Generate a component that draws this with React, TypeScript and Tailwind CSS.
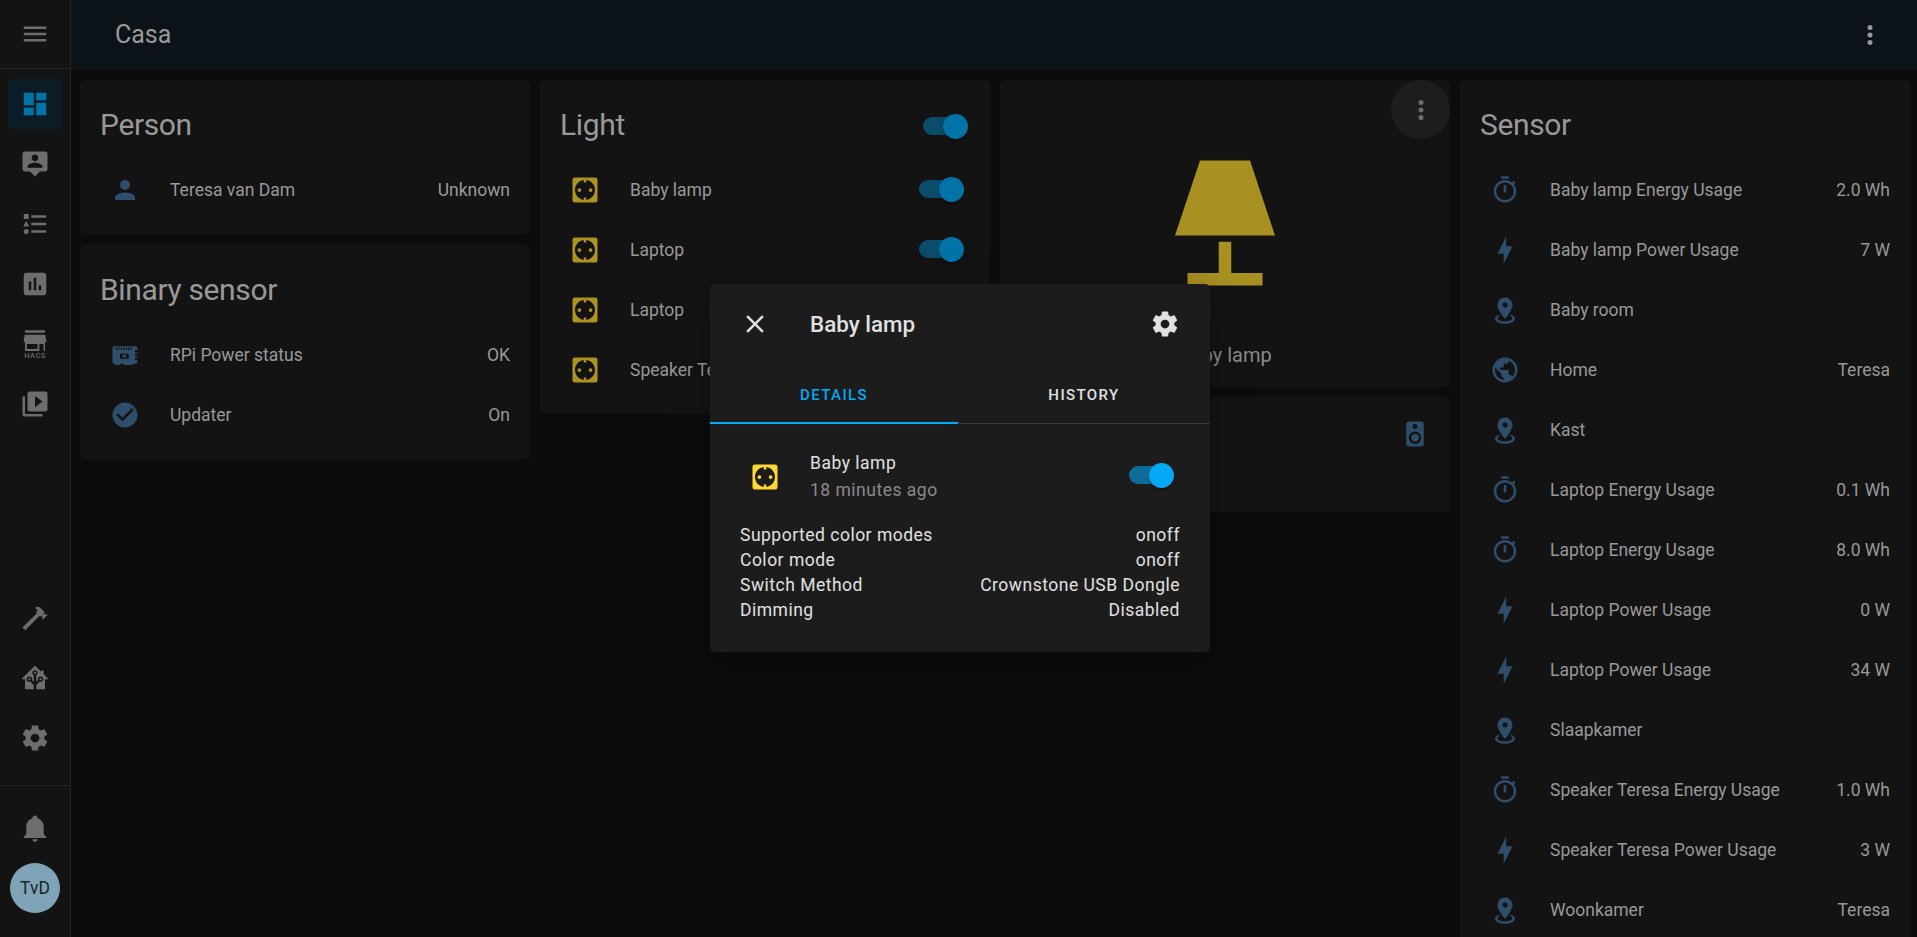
const P = {
  menu: "M3,6H21V8H3V6M3,11H21V13H3V11M3,16H21V18H3V16Z",
  dashboard: "M13,3V9H21V3M13,21H21V11H13M3,21H11V15H3M3,13H11V3H3V13Z",
  tooltipAccount: "M20 2H4C2.9 2 2 2.9 2 4V16C2 17.1 2.9 18 4 18H8L12 22L16 18H20C21.1 18 22 17.1 22 16V4C22 2.9 21.1 2 20 2M12 4.3C13.5 4.3 14.7 5.5 14.7 7S13.5 9.7 12 9.7 9.3 8.5 9.3 7 10.5 4.3 12 4.3M18 15H6V14.1C6 12.1 10 11 12 11S18 12.1 18 14.1V15Z",
  listType: "M5,9.5L7.5,14H2.5L5,9.5M3,4H7V8H3V4M5,20A2,2 0 0,0 7,18A2,2 0 0,0 5,16A2,2 0 0,0 3,18A2,2 0 0,0 5,20M9,5V7H21V5H9M9,19H21V17H9V19M9,13H21V11H9V13Z",
  chartBox: "M19 3H5C3.9 3 3 3.9 3 5V19C3 20.1 3.9 21 5 21H19C20.1 21 21 20.1 21 19V5C21 3.9 20.1 3 19 3M9 17H7V10H9V17M13 17H11V7H13V17M17 17H15V13H17V17Z",
  playBoxes: "M4,6H2V20A2,2 0 0,0 4,22H18V20H4V6M20,2A2,2 0 0,1 22,4V16A2,2 0 0,1 20,18H8A2,2 0 0,1 6,16V4A2,2 0 0,1 8,2H20M12,14.5L18,10L12,5.5V14.5Z",
  hammer: "M2 19.63L13.43 8.2L12.72 7.5L14.14 6.07L12 3.89C13.2 2.7 15.09 2.7 16.27 3.89L19.87 7.5L18.45 8.91H21.29L22 9.62L18.45 13.21L17.74 12.5V9.62L16.27 11.04L15.56 10.33L4.13 21.76L2 19.63Z",
  homeAssistant: "M21.8,13H20V21H13V17.67L15.79,14.88L16.5,15C17.66,15 18.6,14.06 18.6,12.9C18.6,11.74 17.66,10.8 16.5,10.8A2.1,2.1 0 0,0 14.4,12.9L14.5,13.61L13,15.13V9.65C13.66,9.29 14.1,8.6 14.1,7.8A2.1,2.1 0 0,0 12,5.7A2.1,2.1 0 0,0 9.9,7.8C9.9,8.6 10.34,9.29 11,9.65V15.13L9.5,13.61L9.6,12.9A2.1,2.1 0 0,0 7.5,10.8A2.1,2.1 0 0,0 5.4,12.9A2.1,2.1 0 0,0 7.5,15L8.21,14.88L11,17.67V21H4V13H2.25C1.83,13 1.42,13 1.42,12.79C1.43,12.57 1.85,12.15 2.28,11.72L11,3C11.33,2.67 11.67,2.33 12,2.33C12.33,2.33 12.67,2.67 13,3L17,7V6H19V9L21.78,11.78C22.18,12.18 22.59,12.59 22.6,12.8C22.6,13 22.2,13 21.8,13M7.5,12A0.9,0.9 0 0,1 8.4,12.9A0.9,0.9 0 0,1 7.5,13.8A0.9,0.9 0 0,1 6.6,12.9A0.9,0.9 0 0,1 7.5,12M16.5,12C17,12 17.4,12.4 17.4,12.9C17.4,13.4 17,13.8 16.5,13.8A0.9,0.9 0 0,1 15.6,12.9A0.9,0.9 0 0,1 16.5,12M12,6.9C12.5,6.9 12.9,7.3 12.9,7.8C12.9,8.3 12.5,8.7 12,8.7C11.5,8.7 11.1,8.3 11.1,7.8C11.1,7.3 11.5,6.9 12,6.9Z",
  cog: "M12,15.5A3.5,3.5 0 0,1 8.5,12A3.5,3.5 0 0,1 12,8.5A3.5,3.5 0 0,1 15.5,12A3.5,3.5 0 0,1 12,15.5M19.43,12.97C19.47,12.65 19.5,12.33 19.5,12C19.5,11.67 19.47,11.34 19.43,11L21.54,9.37C21.73,9.22 21.78,8.95 21.66,8.73L19.66,5.27C19.54,5.05 19.27,4.96 19.05,5.05L16.56,6.05C16.04,5.66 15.5,5.32 14.87,5.07L14.5,2.42C14.46,2.18 14.25,2 14,2H10C9.75,2 9.54,2.18 9.5,2.42L9.13,5.07C8.5,5.32 7.96,5.66 7.44,6.05L4.95,5.05C4.73,4.96 4.46,5.05 4.34,5.27L2.34,8.73C2.21,8.95 2.27,9.22 2.46,9.37L4.57,11C4.53,11.34 4.5,11.67 4.5,12C4.5,12.33 4.53,12.65 4.57,12.97L2.46,14.63C2.27,14.78 2.21,15.05 2.34,15.27L4.34,18.73C4.46,18.95 4.73,19.03 4.95,18.95L7.44,17.94C7.96,18.34 8.5,18.68 9.13,18.93L9.5,21.58C9.54,21.82 9.75,22 10,22H14C14.25,22 14.46,21.82 14.5,21.58L14.87,18.93C15.5,18.67 16.04,18.34 16.56,17.94L19.05,18.95C19.27,19.03 19.54,18.95 19.66,18.73L21.66,15.27C21.78,15.05 21.73,14.78 21.54,14.63L19.43,12.97Z",
  bell: "M21,19V20H3V19L5,17V11C5,7.9 7.03,5.17 10,4.29C10,4.19 10,4.1 10,4A2,2 0 0,1 12,2A2,2 0 0,1 14,4C14,4.1 14,4.19 14,4.29C16.97,5.17 19,7.9 19,11V17L21,19M14,21A2,2 0 0,1 12,23A2,2 0 0,1 10,21",
  dots: "M12,16A2,2 0 0,1 14,18A2,2 0 0,1 12,20A2,2 0 0,1 10,18A2,2 0 0,1 12,16M12,10A2,2 0 0,1 14,12A2,2 0 0,1 12,14A2,2 0 0,1 10,12A2,2 0 0,1 12,10M12,4A2,2 0 0,1 14,6A2,2 0 0,1 12,8A2,2 0 0,1 10,6A2,2 0 0,1 12,4Z",
  account: "M12,4A4,4 0 0,1 16,8A4,4 0 0,1 12,12A4,4 0 0,1 8,8A4,4 0 0,1 12,4M12,14C16.42,14 20,15.79 20,18V20H4V18C4,15.79 7.58,14 12,14Z",
  checkCircle: "M12 2C6.5 2 2 6.5 2 12S6.5 22 12 22 22 17.5 22 12 17.5 2 12 2M10 17L5 12L6.41 10.59L10 14.17L17.59 6.58L19 8L10 17Z",
  raspberry: "M2 6.5C2 5.7 2.7 5 3.5 5H20.5C21.3 5 22 5.7 22 6.5V8H20V10H22V11H20V13H22V14H20V16H22V17.5C22 18.3 21.3 19 20.5 19H18V20H11V19H8V20H4V19H3.5C2.7 19 2 18.3 2 17.5V6.5ZM4.5 6V8H5.5V6H4.5ZM6.5 6V8H7.5V6H6.5ZM8.5 6V8H9.5V6H8.5ZM10.5 6V8H11.5V6H10.5ZM12.5 6V8H13.5V6H12.5ZM14.5 6V8H15.5V6H14.5ZM16.5 6V8H17.5V6H16.5ZM8 11V15H15V11H8ZM10 12H13V14H10V12Z",
  socket: "M4 2H20A2 2 0 0 1 22 4V20A2 2 0 0 1 20 22H4A2 2 0 0 1 2 20V4A2 2 0 0 1 4 2M13 4.07V6H11V4.07C7.06 4.56 4 7.92 4 12S7.06 19.44 11 19.93V18H13V19.93C16.94 19.44 20 16.08 20 12S16.94 4.56 13 4.07ZM7.5 10.5A1.5 1.5 0 0 0 6 12A1.5 1.5 0 0 0 7.5 13.5A1.5 1.5 0 0 0 9 12A1.5 1.5 0 0 0 7.5 10.5ZM16.5 10.5A1.5 1.5 0 0 0 15 12A1.5 1.5 0 0 0 16.5 13.5A1.5 1.5 0 0 0 18 12A1.5 1.5 0 0 0 16.5 10.5Z",
  timer: "M12,20A7,7 0 0,1 5,13A7,7 0 0,1 12,6A7,7 0 0,1 19,13A7,7 0 0,1 12,20M19.03,7.39L20.45,5.97C20,5.46 19.55,5 19.04,4.56L17.62,6C16.07,4.74 14.12,4 12,4A9,9 0 0,0 3,13A9,9 0 0,0 12,22C17,22 21,17.97 21,13C21,10.88 20.26,8.93 19.03,7.39M11,14H13V8H11M15,1H9V3H15V1Z",
  bolt: "M11 15H6L13 1V9H18L11 23V15Z",
  marker: "M12,2C15.31,2 18,4.66 18,7.95C18,12.41 12,19 12,19C12,19 6,12.41 6,7.95C6,4.66 8.69,2 12,2M12,6A2,2 0 0,0 10,8A2,2 0 0,0 12,10A2,2 0 0,0 14,8A2,2 0 0,0 12,6M20,19C20,21.21 16.42,23 12,23C7.58,23 4,21.21 4,19C4,17.71 5.22,16.56 7.11,15.83L7.75,16.74C6.67,17.19 6,17.81 6,18.5C6,19.88 8.69,21 12,21C15.31,21 18,19.88 18,18.5C18,17.81 17.33,17.19 16.25,16.74L16.89,15.83C18.78,16.56 20,17.71 20,19Z",
  earth: "M17.9,17.39C17.64,16.59 16.89,16 16,16H15V13A1,1 0 0,0 14,12H8V10H10A1,1 0 0,0 11,9V7H13A2,2 0 0,0 15,5V4.59C17.93,5.77 20,8.64 20,12C20,14.08 19.2,15.97 17.9,17.39M11,19.93C7.05,19.44 4,16.08 4,12C4,11.38 4.08,10.78 4.21,10.21L9,15V16A2,2 0 0,0 11,18M12,2A10,10 0 0,0 2,12A10,10 0 0,0 12,22A10,10 0 0,0 22,12A10,10 0 0,0 12,2Z",
  speaker: "M12,12A3,3 0 0,0 9,15A3,3 0 0,0 12,18A3,3 0 0,0 15,15A3,3 0 0,0 12,12M12,20A5,5 0 0,1 7,15A5,5 0 0,1 12,10A5,5 0 0,1 17,15A5,5 0 0,1 12,20M12,4A2,2 0 0,1 14,6A2,2 0 0,1 12,8C10.89,8 10,7.1 10,6C10,4.89 10.89,4 12,4M17,2H7C5.89,2 5,2.89 5,4V20A2,2 0 0,0 7,22H17A2,2 0 0,0 19,20V4C19,2.89 18.1,2 17,2Z",
  close: "M19,6.41L17.59,5L12,10.59L6.41,5L5,6.41L10.59,12L5,17.59L6.41,19L12,13.41L17.59,19L19,17.59L13.41,12L19,6.41Z",
  lamp: "M8,2H16L20,14H4L8,2M11,15H13V20H18V22H6V20H11V15Z",
}

function Icon({ d, className = "w-[30px] h-[30px]" }: { d: string; className?: string }) {
  return (
    <svg viewBox="0 0 24 24" className={`${className} shrink-0 fill-current`} fillRule="evenodd">
      <path d={d} />
    </svg>
  )
}

function Hacs() {
  return (
    <svg viewBox="0 0 24 24" className="w-[30px] h-[30px] shrink-0 fill-current">
      <path d="M4 1H20V3H4ZM3.8 4.6H20.2L21.2 10.5H2.8ZM4 10.5H20V17.6H18.8V12H15.5V17.6H4ZM5.5 12V16H14V12Z" fillRule="evenodd" />
      <text x="12" y="23.2" textAnchor="middle" fontSize="5.8" fontWeight="500" fontFamily="Roboto, sans-serif" letterSpacing="0.5">HACS</text>
    </svg>
  )
}

function Switch({ bright = false, dialog = false }: { bright?: boolean; dialog?: boolean }) {
  return (
    <div className="relative w-[45px] h-[25px] shrink-0 flex items-center">
      <div className={`w-[40px] h-[18px] rounded-full ${dialog ? "bg-[#0f6c99]" : "bg-[#0b4c6b]"}`} />
      <div className={`absolute right-0 top-0 w-[25px] h-[25px] rounded-full shadow-[0_2px_2px_rgba(0,0,0,0.35)] ${bright ? "bg-[#03a9f4]" : "bg-[#0273a6]"}`} />
    </div>
  )
}

function Card({ title, action, children }: { title: string; action?: React.ReactNode; children: React.ReactNode }) {
  return (
    <section className="bg-[#131313] rounded-[5px] pb-[14px]">
      <div className="h-[80px] pl-[20px] pr-[22px] pt-[10px] flex items-center justify-between">
        <h2 className="text-[30px] font-normal leading-[40px] tracking-[-0.36px] text-[#999999]">{title}</h2>
        {action && <div className="mt-[2px]">{action}</div>}
      </div>
      {children}
    </section>
  )
}

function Row({ icon, iconColor = "text-[#2e4e6b]", name, value, control }: { icon: string; iconColor?: string; name: string; value?: string; control?: React.ReactNode }) {
  return (
    <div className="h-[60px] pl-[30px] pr-[20px] flex items-center text-[17.5px] text-[#999999]">
      <div className={iconColor}>
        <Icon d={icon} />
      </div>
      <span className="ml-[30px] flex-1 whitespace-nowrap">{name}</span>
      {value && <span className="whitespace-nowrap">{value}</span>}
      {control && <div className="mr-[6px] mb-[2px]">{control}</div>}
    </div>
  )
}

const sensors: [string, string, string?][] = [
  [P.timer, "Baby lamp Energy Usage", "2.0 Wh"],
  [P.bolt, "Baby lamp Power Usage", "7 W"],
  [P.marker, "Baby room"],
  [P.earth, "Home", "Teresa"],
  [P.marker, "Kast"],
  [P.timer, "Laptop Energy Usage", "0.1 Wh"],
  [P.timer, "Laptop Energy Usage", "8.0 Wh"],
  [P.bolt, "Laptop Power Usage", "0 W"],
  [P.bolt, "Laptop Power Usage", "34 W"],
  [P.marker, "Slaapkamer"],
  [P.timer, "Speaker Teresa Energy Usage", "1.0 Wh"],
  [P.bolt, "Speaker Teresa Power Usage", "3 W"],
  [P.marker, "Woonkamer", "Teresa"],
]

const attributes = [
  ["Supported color modes", "onoff"],
  ["Color mode", "onoff"],
  ["Switch Method", "Crownstone USB Dongle"],
  ["Dimming", "Disabled"],
]

function NavItem({ children, active = false }: { children: React.ReactNode; active?: boolean }) {
  return (
    <div className={`mx-[8px] h-[50px] rounded-[5px] flex items-center justify-center ${active ? "bg-[#0b1c26] text-[#0273a6]" : "text-[#6d6d6d]"}`}>
      {children}
    </div>
  )
}

export default function App() {
  return (
    <div className="relative h-[937px] overflow-hidden flex bg-[#0c0c0c] font-['Roboto',sans-serif]">
      <aside className="w-[71px] shrink-0 bg-[#131313] border-r border-[#252525] flex flex-col">
        <div className="h-[69px] shrink-0 border-b border-[#252525] flex items-center justify-center text-[#6d6d6d]">
          <Icon d={P.menu} />
        </div>
        <nav className="pt-[10px] flex flex-col gap-[10px]">
          <NavItem active><Icon d={P.dashboard} /></NavItem>
          <NavItem><Icon d={P.tooltipAccount} /></NavItem>
          <NavItem><Icon d={P.listType} /></NavItem>
          <NavItem><Icon d={P.chartBox} /></NavItem>
          <NavItem><Hacs /></NavItem>
          <NavItem><Icon d={P.playBoxes} /></NavItem>
        </nav>
        <div className="mt-auto flex flex-col gap-[10px]">
          <NavItem><Icon d={P.hammer} /></NavItem>
          <NavItem><Icon d={P.homeAssistant} /></NavItem>
          <NavItem><Icon d={P.cog} /></NavItem>
          <div className="mt-[12px] border-t border-[#252525] pt-[17px] pb-[24px] flex flex-col gap-[10px]">
            <NavItem><Icon d={P.bell} /></NavItem>
            <div className="mx-auto w-[50px] h-[50px] rounded-full bg-[#7fa3b7] text-[#1c2328] text-[17.5px] flex items-center justify-center">TvD</div>
          </div>
        </div>
      </aside>

      <div className="flex-1 min-w-0">
        <header className="h-[69px] bg-[#0b1218] pl-[44px] pr-[32px] flex items-center justify-between text-[#999999]">
          <h1 className="text-[25px] font-normal">Casa</h1>
          <Icon d={P.dots} />
        </header>
        <main className="pt-[11px] pl-[9px] flex gap-[10px] items-start">
          <div className="w-[450px] flex flex-col gap-[11px]">
            <Card title="Person">
              <Row icon={P.account} name="Teresa van Dam" value="Unknown" />
            </Card>
            <Card title="Binary sensor">
              <Row icon={P.raspberry} name="RPi Power status" value="OK" />
              <Row icon={P.checkCircle} name="Updater" value="On" />
            </Card>
          </div>

          <div className="w-[450px]">
            <Card title="Light" action={<Switch />}>
              <Row icon={P.socket} iconColor="text-[#ac9324]" name="Baby lamp" control={<Switch />} />
              <Row icon={P.socket} iconColor="text-[#ac9324]" name="Laptop" control={<Switch />} />
              <Row icon={P.socket} iconColor="text-[#ac9324]" name="Laptop" control={<Switch />} />
              <Row icon={P.socket} iconColor="text-[#ac9324]" name="Speaker Teresa" control={<Switch />} />
            </Card>
          </div>

          <div className="w-[450px] flex flex-col gap-[10px]">
            <section className="relative h-[307px] bg-[#131313] rounded-[5px] flex flex-col items-center pt-[68px]">
              <Icon d={P.lamp} className="w-[150px] h-[150px] text-[#a99022]" />
              <span className="mt-[42px] text-[20px] text-[#8a8a8a]">Baby lamp</span>
              <div className="absolute top-0 right-0 w-[59px] h-[59px] rounded-full bg-[#1d1d1d] flex items-center justify-center text-[#6d6d6d]">
                <Icon d={P.dots} />
              </div>
            </section>
            <section className="h-[115px] bg-[#131313] rounded-[5px] flex justify-end pt-[22px] pr-[20px] text-[#2e4e6b]">
              <Icon d={P.speaker} />
            </section>
          </div>

          <div className="w-[450px]">
            <Card title="Sensor">
              {sensors.map(([icon, name, value], i) => (
                <Row key={i} icon={icon} name={name} value={value} />
              ))}
            </Card>
          </div>
        </main>
      </div>

      <div className="absolute left-[710px] top-[284px] w-[500px] h-[368px] rounded-[5px] bg-[#1c1c1c] shadow-[0_10px_40px_rgba(0,0,0,0.3)] text-[#e1e1e1]">
        <div className="h-[80px] pl-[30px] pr-[30px] flex items-center">
          <Icon d={P.close} />
          <h3 className="ml-[40px] flex-1 pt-[1px] text-[22.4px] font-medium">Baby lamp</h3>
          <Icon d={P.cog} />
        </div>
        <div className="h-[60px] grid grid-cols-[248px_1fr] border-b border-[#3a3a3a] text-[15px] font-medium tracking-[1.4px]">
          <div className="relative flex items-center justify-center pt-[4px] text-[#03a9f4]">
            DETAILS
            <div className="absolute left-0 right-0 -bottom-px h-[2px] bg-[#03a9f4]" />
          </div>
          <div className="flex items-center justify-center pt-[4px]">HISTORY</div>
        </div>
        <div className="pt-[25px] pl-[40px] pr-[30px]">
          <div className="flex items-center h-[56px]">
            <div className="text-[#fdd835]">
              <Icon d={P.socket} />
            </div>
            <div className="ml-[30px] flex-1 text-[17.5px] tracking-[0.5px]">
              <div className="leading-[27px]">Baby lamp</div>
              <div className="leading-[27px] text-[#8a8a8a]">18 minutes ago</div>
            </div>
            <div className="mr-[6px] mb-[4px]"><Switch bright dialog /></div>
          </div>
        </div>
        <div className="mt-[18px] px-[30px] text-[17.5px] leading-[25px] tracking-[0.5px]">
          {attributes.map(([k, v]) => (
            <div key={k} className="flex justify-between">
              <span>{k}</span>
              <span>{v}</span>
            </div>
          ))}
        </div>
      </div>
    </div>
  )
}
